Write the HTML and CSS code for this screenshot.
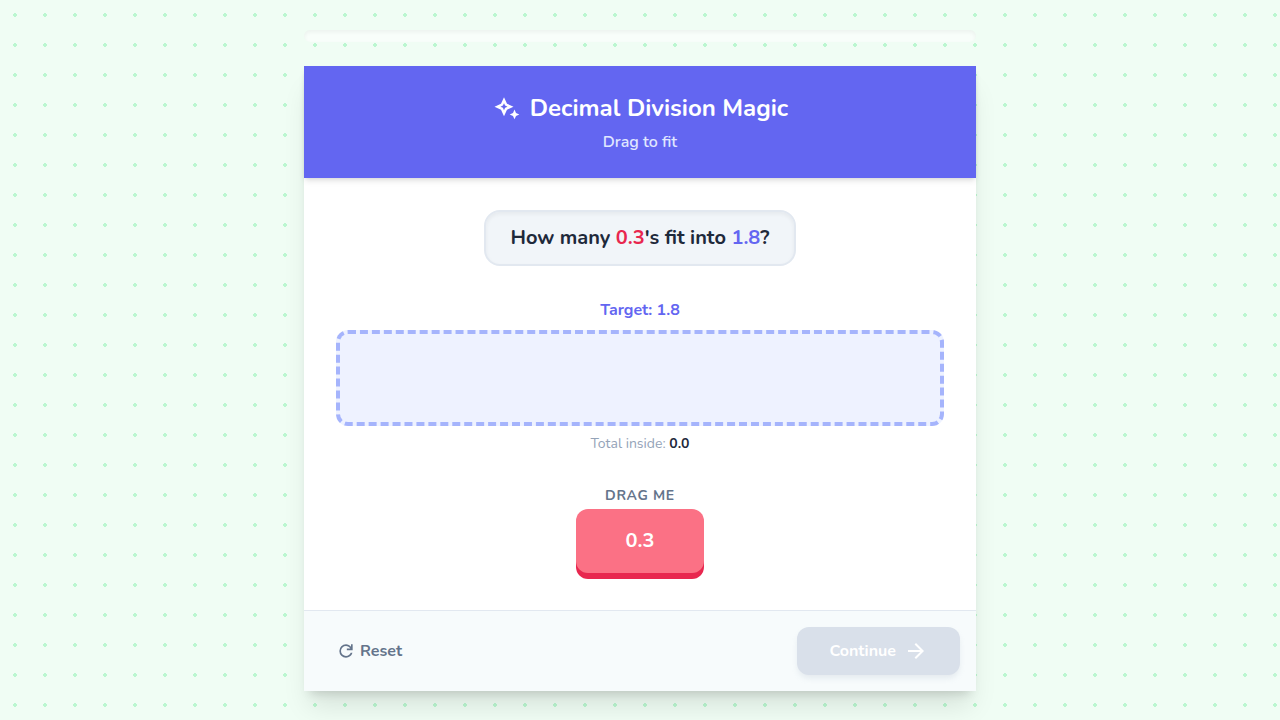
FILE: index.html
```
<!DOCTYPE html>
<html lang="en">
<head>
    <meta charset="UTF-8">
    <meta name="viewport" content="width=device-width, initial-scale=1.0">
    <title>Decimal Division Magic</title>
    <link rel="stylesheet" href="styles.css">
</head>
<body>
    <div class="container">
        <div class="progress"></div>

        <div class="card">
            <header class="card-header">
                <h1 class="title">
                    <svg class="icon-sparkle" viewBox="0 0 30 30" aria-hidden="true">
                        <path fill-rule="evenodd" d="M12 4.300L15 10.700L21.500 13.700L15 16.700L12 23.200L9 16.700L2.500 13.700L9 10.700ZM12 10.200L10.900 12.600L8.500 13.700L10.900 14.800L12 17.200L13.100 14.800L15.500 13.700L13.100 12.600Z"/>
                        <path d="M22.500 16.600L24 20L27.300 21.400L24 22.900L22.500 26.200L21 22.900L17.700 21.400L21 20Z"/>
                    </svg>
                    Decimal Division Magic
                </h1>
                <p class="subtitle">Drag to fit</p>
            </header>

            <main class="card-body">
                <div class="question">How many <span class="piece-value">0.3</span>'s fit into <span class="target-value">1.8</span>?</div>

                <section class="target">
                    <h2 class="target-label">Target: 1.8</h2>
                    <div class="drop-zone"></div>
                    <p class="total">Total inside: <span class="total-value">0.0</span></p>
                </section>

                <section class="source">
                    <p class="source-label" id="drag-label">Drag me</p>
                    <button class="block" type="button" draggable="true" aria-describedby="drag-label">0.3</button>
                </section>
            </main>

            <footer class="card-footer">
                <button class="reset-btn" type="button">
                    <svg class="icon-reset" viewBox="0 0 24 24" aria-hidden="true">
                        <path d="M12 20q-3.350 0-5.675-2.325T4 12t2.325-5.675T12 4q1.725 0 3.300.713T18 6.750V4h2v7h-7V9h4.200q-.8-1.400-2.187-2.200T12 6Q9.500 6 7.750 7.750T6 12t1.750 4.250T12 18q1.925 0 3.475-1.100T17.650 14h2.100q-.7 2.650-2.850 4.325T12 20"/>
                    </svg>
                    Reset
                </button>
                <button class="continue-btn" type="button" disabled>
                    Continue
                    <svg class="icon-arrow" viewBox="0 0 24 24" aria-hidden="true">
                        <path d="M16.175 13H4v-2h12.175l-5.600-5.600L12 4l8 8-8 8-1.425-1.400z"/>
                    </svg>
                </button>
            </footer>
        </div>
    </div>
</body>
</html>
```

FILE: styles.css
```
* {
    box-sizing: border-box;
}

body {
    margin: 0;
    min-height: 100vh;
    display: flex;
    justify-content: center;
    align-items: center;
    font-family: Nunito, Lato, 'Open Sans', sans-serif;
    font-size: 16px;
    line-height: 24px;
    color: #1e293b;
    background-color: #f0fdf4;
    background-image: radial-gradient(#bbf7d0 2px, transparent 2px);
    background-size: 30px 30px;
}

h1,
h2,
p {
    margin: 0;
}

button {
    border: none;
    padding: 0;
    font: inherit;
    cursor: pointer;
}

svg {
    fill: currentColor;
    flex-shrink: 0;
}

.container {
    width: 100%;
    max-width: 672px;
    display: flex;
    flex-direction: column;
    gap: 24px;
}

.progress {
    height: 12px;
    border-radius: 12px;
    background: rgba(255, 255, 255, 0.5);
    box-shadow: inset 0 2px 4px rgba(0, 0, 0, 0.05);
}

.card {
    background: #fff;
    box-shadow: 0 20px 25px -5px rgba(0, 0, 0, 0.1), 0 8px 10px -6px rgba(0, 0, 0, 0.15);
}

.card-header {
    padding: 24px;
    text-align: center;
    color: #fff;
    background: #6366f1;
    box-shadow: 0 4px 6px -1px rgba(0, 0, 0, 0.1), 0 2px 4px -2px rgba(0, 0, 0, 0.1);
}

.title {
    display: flex;
    justify-content: center;
    align-items: center;
    gap: 8px;
    font-size: 24px;
    line-height: 36px;
    font-weight: 700;
}

.icon-sparkle {
    width: 30px;
    height: 30px;
}

.subtitle {
    margin-top: 4px;
    font-weight: 600;
    color: #e0e7ff;
}

.card-body {
    padding: 32px;
    display: flex;
    flex-direction: column;
    align-items: center;
    gap: 32px;
}

.question {
    padding: 12px 24px;
    border: 2px solid #e2e8f0;
    border-radius: 16px;
    background: #f1f5f9;
    box-shadow: inset 0 2px 4px rgba(0, 0, 0, 0.05);
    font-size: 20px;
    line-height: 28px;
    font-weight: 700;
}

.piece-value {
    color: #e8274f;
}

.target-value {
    color: #6366f1;
}

.target {
    width: 100%;
    display: flex;
    flex-direction: column;
    gap: 8px;
    text-align: center;
}

.target-label {
    font-size: 16px;
    line-height: 24px;
    font-weight: 700;
    color: #6366f1;
}

.drop-zone {
    height: 96px;
    border: 4px dashed #a5b4fc;
    border-radius: 12px;
    background: #eef2ff;
}

.total {
    font-size: 14px;
    line-height: 20px;
    color: #94a3b8;
}

.total-value {
    font-weight: 700;
    color: #1e293b;
}

.source {
    display: flex;
    flex-direction: column;
    align-items: center;
    gap: 3px;
    padding-bottom: 5px;
}

.source-label {
    font-size: 14px;
    line-height: 20px;
    font-weight: 700;
    letter-spacing: 0.05em;
    text-transform: uppercase;
    color: #64748b;
}

.block {
    width: 128px;
    height: 64px;
    border-radius: 12px;
    background: #fb7185;
    box-shadow: 0 6px 0 #e8274f;
    font-size: 20px;
    font-weight: 700;
    color: #fff;
    cursor: grab;
}

.card-footer {
    display: flex;
    justify-content: space-between;
    align-items: center;
    padding: 16px;
    border-top: 1px solid #e2e8f0;
    background: #f7fbfc;
}

.reset-btn,
.continue-btn {
    display: flex;
    align-items: center;
    height: 48px;
    border-radius: 12px;
    font-weight: 700;
}

.reset-btn {
    gap: 4px;
    padding: 0 16px;
    background: transparent;
    color: #64748b;
}

.icon-reset {
    width: 20px;
    height: 20px;
}

.continue-btn {
    gap: 8px;
    padding: 0 32px;
    background: #d9e0ea;
    box-shadow: 0 4px 6px -1px rgba(148, 163, 184, 0.2);
    color: #fff;
    cursor: not-allowed;
}

.icon-arrow {
    width: 24px;
    height: 24px;
}
```
